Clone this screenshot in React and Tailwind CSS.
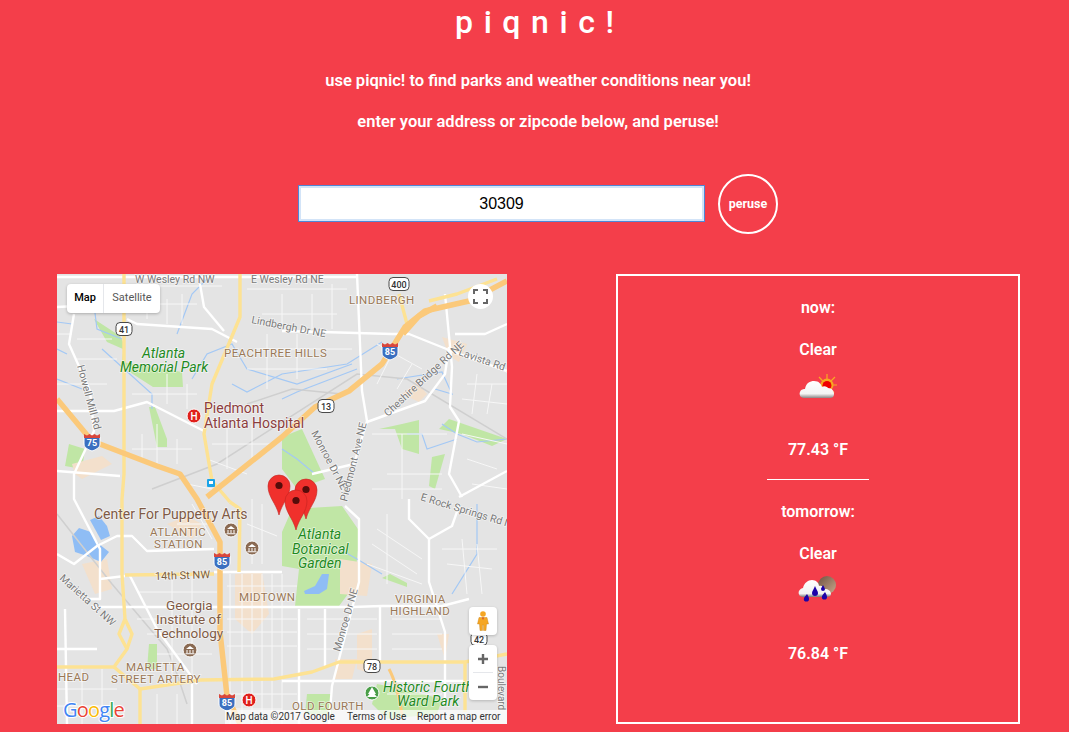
const yellowRoads = [
  'M67 0 L67 200 L65 225 L65 300 L68 345 L75 360 L70 375 L57 393 L0 393',
  'M68 345 L62 360 L70 375',
  'M183 0 L183 43 L155 110 L147 160 L155 207 L173 228',
  'M173 228 L183 235 L182 298',
  'M68 301 L157 300',
  'M57 393 L83 415 L143 406 L217 405 L255 398 L282 388 L408 388 L450 380',
  'M83 415 L83 450',
  'M408 388 L408 438',
  'M342 20 L350 50',
  'M372 27 L400 20 L440 5',
];

const orangeRoads = [
  'M0 125 L35 167 L100 192 L123 200 L140 225 L163 268 L163 358 L170 422 L183 450',
  'M450 7 L412 27 L368 37 L348 53 L325 90 L292 117 L258 133 L225 163 L150 223',
  'M346 60 L362 42 L380 32',
];

const whiteRoads = [
  'M0 3 L300 3',
  'M70 45 L80 50 L155 55 L180 68',
  'M143 10 L147 33 L167 57',
  'M17 40 L12 70 L33 117 L37 157 L17 200 L17 225 L43 275 L43 325 L30 325',
  'M0 137 L57 137 L90 128 L147 157',
  'M0 33 L20 32',
  'M0 197 L63 202',
  'M225 57 L265 58 L335 60 L352 60 L402 80 L450 97',
  'M300 0 L305 117 L310 147 L297 190 L255 200',
  'M388 20 L395 93 L393 133 L402 147 L392 200 L405 223',
  'M310 148 L368 127 L388 100 L392 73',
  'M450 50 L428 60 L398 60',
  'M402 223 L450 197',
  'M288 232 L302 245 L302 308 L295 335 L275 412 L272 450',
  'M35 333 L225 333 L295 333 L325 332 L385 332 L412 325',
  'M352 225 L352 245 L372 265 L395 252 L402 232',
  'M372 265 L372 308 L388 358 L388 432',
  'M323 332 L323 388',
  'M225 407 L408 407',
  'M242 335 L242 450',
  'M268 335 L268 392',
  'M157 298 L225 298',
  'M43 305 L68 302',
  'M0 280 L17 290 L40 272 L60 262 L75 262 L90 277 L157 275',
  'M8 335 L10 450',
  'M72 300 L100 355 L140 410',
  'M0 375 L40 375',
  'M135 450 L135 410',
];

const thinRoads = [
  'M173 300 L173 450 M185 300 L185 450 M195 300 L195 450 M205 300 L205 450 M215 300 L215 450 M225 300 L225 450',
  'M170 312 L240 312 M170 345 L240 345 M170 358 L240 358 M170 372 L240 372 M170 420 L240 420 M170 435 L225 435',
  'M250 345 L320 345 M250 360 L320 360 M250 375 L320 375 M335 345 L385 345 M335 360 L385 360 M335 375 L385 375 M330 420 L385 420',
  'M80 318 L160 318 M80 345 L160 345 M90 360 L155 360 M100 380 L155 380 M115 300 L115 400 M135 300 L135 400',
  'M0 415 L60 415 M0 432 L60 432 M25 395 L25 450 M45 395 L45 450 M100 420 L100 450 M120 420 L120 450',
  'M90 20 L90 45 M110 25 L110 50 M125 20 L125 50 M80 12 L165 12 M90 30 L140 30',
  'M20 65 L55 65 M20 85 L60 85 M0 110 L50 110 M0 60 L15 60',
  'M75 120 L140 120 M110 100 L110 130 M130 110 L130 135 M75 175 L135 175 M85 160 L85 185 M100 150 L100 190 M120 165 L120 190',
  'M155 170 L215 170 M170 145 L170 195 M195 150 L195 190 M150 185 L190 200',
  'M190 15 L290 15 M205 40 L280 40 M225 20 L225 55 M255 20 L255 55 M275 10 L275 55',
  'M200 75 L295 75 M190 95 L270 95 M210 60 L210 115 M240 60 L240 105',
  'M320 70 L365 95 M335 80 L320 110 M355 90 L340 115',
  'M410 110 L450 110 M405 125 L450 130 M420 100 L415 140 M435 110 L430 140',
  'M315 160 L390 160 M330 200 L385 200 M345 160 L345 225 M315 215 L385 215',
  'M405 160 L450 170 M410 185 L440 195 M415 210 L450 215',
  'M320 255 L365 285 M315 270 L360 300 M330 240 L330 310 M310 290 L365 310',
  'M385 275 L440 275 M390 290 L435 295 M405 265 L410 320 M420 270 L425 320',
  'M135 230 L155 265 M120 250 L155 250 M130 210 L155 215',
  'M190 250 L220 262 M195 225 L195 290 M205 230 L205 290',
];

const parks = [
  'M37 45 L63 62 L67 70 L65 88 L125 98 L126 113 L96 113 L68 95 L66 75 L50 68 Z',
  'M235 235 L285 232 L303 258 L297 312 L282 332 L238 332 L242 295 L225 292 L225 258 Z',
  'M92 133 L98 133 L110 165 L110 173 L100 173 Z',
  'M225 163 L245 155 L268 205 L240 215 L225 195 Z',
  'M345 150 L362 146 L362 180 L345 175 L338 155 L322 155 L345 150 Z',
  'M382 155 L392 145 L450 165 L435 172 L405 160 Z',
  'M92 370 L100 370 L100 395 L90 395 Z',
  'M320 410 L345 415 L385 425 L380 440 L330 445 L315 430 Z',
  'M250 420 L275 420 L275 440 L248 440 Z',
  'M12 170 L28 175 L25 195 L8 192 Z',
  'M333 300 L350 309 L350 313 L325 304 Z',
  'M375 183 L388 180 L378 215 L372 212 Z',
];

const peachAreas = [
  'M15 190 L45 182 L55 190 L35 200 L25 205 L18 200 Z',
  'M283 285 L315 290 L310 322 L283 320 Z',
  'M345 120 L360 108 L370 120 L362 128 Z',
  'M385 63 L410 70 L402 88 L392 82 Z',
  'M178 300 L205 298 L212 340 L195 360 L178 345 Z',
  'M110 250 L130 242 L145 250 L135 265 Z',
  'M25 290 L50 285 L55 315 L38 320 Z',
  'M300 360 L315 355 L315 400 L300 395 Z',
  'M380 360 L392 360 L388 385 Z',
  'M278 385 L300 385 L295 405 L278 405 Z',
];

const streams = [
  'M0 48 L15 50 M35 15 L40 55 L65 65 M45 75 L95 120 L95 135',
  'M135 105 L150 80 L175 70 L190 95 L240 110 L295 90',
  'M175 110 L190 118 L225 100 L290 90 L325 68',
  'M340 105 L385 98 L395 120 L378 115',
  'M300 95 L240 118 L225 125',
  'M385 150 L400 160 L420 168 L450 165',
  'M350 160 L365 160 L370 175 L400 165',
  'M225 175 L240 185 L258 200',
  'M282 275 L300 285 L325 300',
  'M420 230 L420 280 L395 320',
  'M0 75 L10 80 M0 105 L25 115',
  'M120 60 L135 20 L150 5',
];

const railLines = [
  'M95 215 L160 190 L300 100 L350 105 L450 165',
  'M0 240 L55 310 L110 375 L120 400 L130 430',
  'M285 120 L235 115 L190 130',
];

const mapLabels = [
  { t: 'W Wesley Rd NW', x: 78, y: 9, s: 10.5, f: '#7a7a7a' },
  { t: 'E Wesley Rd NE', x: 194, y: 9, s: 10.5, f: '#7a7a7a' },
  { t: 'Lindbergh Dr NE', x: 194, y: 49, s: 10.5, f: '#7a7a7a', r: 'rotate(11 194 49)' },
  { t: 'Lavista Rd NE', x: 401, y: 81, s: 10.5, f: '#7a7a7a', r: 'rotate(19 401 81)' },
  { t: 'Howell Mill Rd', x: 20, y: 92, s: 10.5, f: '#7a7a7a', r: 'rotate(75 20 92)' },
  { t: 'Cheshire Bridge Rd NE', x: 331, y: 143, s: 10.5, f: '#7a7a7a', r: 'rotate(-43 331 143)' },
  { t: 'Monroe Dr NE', x: 254, y: 159, s: 10.5, f: '#7a7a7a', r: 'rotate(62 254 159)' },
  { t: 'Piedmont Ave NE', x: 290, y: 228, s: 10.5, f: '#7a7a7a', r: 'rotate(-76 290 228)' },
  { t: 'E Rock Springs Rd NE', x: 363, y: 226, s: 10.5, f: '#7a7a7a', r: 'rotate(17 363 226)' },
  { t: 'Monroe Dr NE', x: 283, y: 378, s: 10.5, f: '#7a7a7a', r: 'rotate(-74 283 378)' },
  { t: 'Marietta St NW', x: 2, y: 305, s: 10.5, f: '#7a7a7a', r: 'rotate(42 2 305)' },
  { t: 'Boulevard', x: 441, y: 392, s: 10, f: '#7a7a7a', r: 'rotate(90 441 392)' },
  { t: 'Atlanta', x: 85, y: 84, s: 14, f: '#1f8a1f', i: true },
  { t: 'Memorial Park', x: 63, y: 98, s: 14, f: '#1f8a1f', i: true },
  { t: 'Atlanta', x: 241, y: 265, s: 14, f: '#1f8a1f', i: true },
  { t: 'Botanical', x: 235, y: 280, s: 14, f: '#1f8a1f', i: true },
  { t: 'Garden', x: 241, y: 294, s: 14, f: '#1f8a1f', i: true },
  { t: 'Historic Fourth', x: 326, y: 418, s: 14, f: '#1f8a1f', i: true },
  { t: 'Ward Park', x: 340, y: 432, s: 14, f: '#1f8a1f', i: true },
  { t: 'Piedmont', x: 147, y: 139, s: 14, f: '#8c3d3d' },
  { t: 'Atlanta Hospital', x: 147, y: 154, s: 14, f: '#8c3d3d' },
  { t: 'Center For Puppetry Arts', x: 37, y: 245, s: 14, f: '#7f5a45' },
  { t: 'Georgia', x: 109, y: 336, s: 13.5, f: '#7f5a45' },
  { t: 'Institute of', x: 99, y: 350, s: 13.5, f: '#7f5a45' },
  { t: 'Technology', x: 97, y: 364, s: 13.5, f: '#7f5a45' },
  { t: '14th St NW', x: 98, y: 306, s: 11, f: '#7a5c3c', r: 'rotate(-2 98 306)' },
  { t: 'PEACHTREE HILLS', x: 167, y: 83, s: 11.5, f: '#9a7856', l: 0.4 },
  { t: 'LINDBERGH', x: 292, y: 30, s: 11.5, f: '#9a7856', l: 0.4 },
  { t: 'ATLANTIC', x: 93, y: 262, s: 11.5, f: '#9a7856', l: 0.4 },
  { t: 'STATION', x: 97, y: 274, s: 11.5, f: '#9a7856', l: 0.4 },
  { t: 'MIDTOWN', x: 182, y: 327, s: 11.5, f: '#9a7856', l: 0.4 },
  { t: 'VIRGINIA', x: 338, y: 329, s: 11.5, f: '#9a7856', l: 0.4 },
  { t: 'HIGHLAND', x: 333, y: 341, s: 11.5, f: '#9a7856', l: 0.4 },
  { t: 'MARIETTA', x: 69, y: 397, s: 11.5, f: '#9a7856', l: 0.4 },
  { t: 'STREET ARTERY', x: 54, y: 409, s: 11.5, f: '#9a7856', l: 0.4 },
  { t: 'HEAD', x: 1, y: 407, s: 11.5, f: '#9a7856', l: 0.4 },
  { t: 'OLD FOURTH', x: 235, y: 436, s: 11.5, f: '#9a7856', l: 0.4 },
];

function Shield({ x, y, label }) {
  return (
    <g transform={`translate(${x} ${y})`}>
      <path d="M-8 -5 L8 -5 L8 2 C8 6 3 8 0 9 C-3 8 -8 6 -8 2 Z" fill="#3a6fc0" stroke="#fff" strokeWidth="1" />
      <path d="M-8 -8 L-5 -6.5 L-2.5 -8 L0 -6.5 L2.5 -8 L5 -6.5 L8 -8 L8 -4 L-8 -4 Z" fill="#d9473c" />
      <text x="0" y="4" textAnchor="middle" fontSize="9" fontWeight="700" fill="#fff" fontFamily="Roboto, sans-serif">{label}</text>
    </g>
  );
}

function RoadSign({ x, y, label, w = 16 }) {
  return (
    <g transform={`translate(${x} ${y})`}>
      <rect x={-w / 2} y="-6.5" width={w} height="13" rx="4" fill="#fff" stroke="#4a4a4a" strokeWidth="1" />
      <text x="0" y="3.5" textAnchor="middle" fontSize="9" fontWeight="500" fill="#333" fontFamily="Roboto, sans-serif">{label}</text>
    </g>
  );
}

function Pin({ x, y }) {
  return (
    <g transform={`translate(${x} ${y})`}>
      <path d="M0 40 C-3 28 -11 22 -11 11 A11 11 0 1 1 11 11 C11 22 3 28 0 40 Z" fill="#f0302c" stroke="#c22420" strokeWidth="0.6" />
      <circle cx="0" cy="10.5" r="3.6" fill="#560c0a" />
    </g>
  );
}

function HospitalDot({ x, y }) {
  return (
    <g transform={`translate(${x} ${y})`}>
      <circle r="7" fill="#e0201c" stroke="#fff" strokeWidth="1" />
      <text y="3.5" textAnchor="middle" fontSize="10" fontWeight="500" fill="#fff" fontFamily="Roboto, sans-serif">H</text>
    </g>
  );
}

function PoiDot({ x, y, fill = '#8a6a52' }) {
  return (
    <g transform={`translate(${x} ${y})`}>
      <circle r="7" fill={fill} stroke="#fff" strokeWidth="1" />
      <path d="M-4 -1 L0 -4 L4 -1 Z M-3.5 0 H-2.5 V3 H-3.5 Z M-0.5 0 H0.5 V3 H-0.5 Z M2.5 0 H3.5 V3 H2.5 Z M-4.5 3.2 H4.5 V4.2 H-4.5 Z" fill="#fff" />
    </g>
  );
}

function MapArt() {
  return (
    <svg viewBox="0 0 450 450" className="w-full h-full block font-normal" style={{ fontFamily: 'Roboto, sans-serif' }}>
      <rect width="450" height="450" fill="#e4e4e4" />
      {parks.map((d, i) => <path key={i} d={d} fill="#c0e6a5" />)}
      {peachAreas.map((d, i) => <path key={i} d={d} fill="#f3e0cc" />)}
      {streams.map((d, i) => <path key={i} d={d} fill="none" stroke="#a3c8f5" strokeWidth="1.2" />)}
      <path d="M15 262 L22 254 L34 258 L42 270 L52 278 L44 288 L30 282 L18 278 Z" fill="#8fbdf5" />
      <path d="M33 246 L42 242 L50 252 L53 262 L44 266 Z" fill="#8fbdf5" />
      <path d="M247 317 L258 312 L265 300 L272 300 L270 315 L262 320 L248 320 Z" fill="#8fbdf5" />
      {railLines.map((d, i) => <path key={i} d={d} fill="none" stroke="#cfcfcf" strokeWidth="1.5" />)}
      {thinRoads.map((d, i) => <path key={i} d={d} fill="none" stroke="#f7f7f7" strokeWidth="1" />)}
      {whiteRoads.map((d, i) => <path key={i} d={d} fill="none" stroke="#fff" strokeWidth="2.4" strokeLinejoin="round" />)}
      {yellowRoads.map((d, i) => <path key={i} d={d} fill="none" stroke="#fde293" strokeWidth="3.4" strokeLinejoin="round" />)}
      {orangeRoads.map((d, i) => <path key={i} d={d} fill="none" stroke="#fbc97a" strokeWidth="5.5" strokeLinejoin="round" />)}
      <path d="M332 395 Q340 410 345 440" fill="none" stroke="#fbc97a" strokeWidth="3" />

      {mapLabels.map((l, i) => (
        <text
          key={i}
          x={l.x}
          y={l.y}
          transform={l.r}
          fontSize={l.s}
          fill={l.f}
          fontStyle={l.i ? 'italic' : 'normal'}
          letterSpacing={l.l}
          stroke="#ffffff"
          strokeOpacity="0.6"
          strokeWidth="1.5"
          paintOrder="stroke"
        >
          {l.t}
        </text>
      ))}

      <Shield x={35} y={168} label="75" />
      <Shield x={333} y={77} label="85" />
      <Shield x={165} y={287} label="85" />
      <Shield x={170} y={428} label="85" />
      <RoadSign x={67} y={55} label="41" />
      <RoadSign x={342} y={10} label="400" w={20} />
      <RoadSign x={269} y={132} label="13" />
      <RoadSign x={315} y={392} label="78" />
      <RoadSign x={422} y={365} label="42" />

      <rect x="150" y="205" width="8" height="8" rx="1" fill="#19a4e8" />
      <rect x="152" y="207" width="4" height="3" fill="#fff" />
      <HospitalDot x={137} y={142} />
      <HospitalDot x={192} y={426} />
      <PoiDot x={174} y={256} />
      <PoiDot x={195} y={274} />
      <PoiDot x={133} y={376} />
      <circle cx="315" cy="419" r="7" fill="#4a9e48" stroke="#fff" strokeWidth="1" />
      <path d="M315 413 L319 420 L311 420 Z M315 417 L320 423 L310 423 Z" fill="#fff" />

      <Pin x={222} y={201} />
      <Pin x={249} y={205} />
      <Pin x={239} y={216} />

      <text x="6" y="443" fontSize="20" fontWeight="500" fontFamily="'Open Sans', sans-serif" stroke="#fff" strokeWidth="2" paintOrder="stroke" letterSpacing="-0.8">
        <tspan fill="#4285f4">G</tspan>
        <tspan fill="#ea4335">o</tspan>
        <tspan fill="#fbbc05">o</tspan>
        <tspan fill="#4285f4">g</tspan>
        <tspan fill="#34a853">l</tspan>
        <tspan fill="#ea4335">e</tspan>
      </text>
    </svg>
  );
}

function MapPanel() {
  return (
    <div className="relative w-[450px] h-[450px] overflow-hidden shrink-0">
      <MapArt />
      {/* map type buttons */}
      <div className="absolute left-[10px] top-[10px] flex h-[29px] bg-white rounded-sm shadow-[0_1px_3px_rgba(0,0,0,0.25)] text-[11px] font-['Roboto',sans-serif]">
        <div className="w-[37px] flex items-center justify-center font-medium text-black border-r border-gray-200">Map</div>
        <div className="w-[56px] flex items-center justify-center text-[#565656] font-normal">Satellite</div>
      </div>
      {/* fullscreen */}
      <div className="absolute left-[411px] top-[10px] w-[25px] h-[25px] rounded-full bg-white flex items-center justify-center">
        <svg width="15" height="15" viewBox="0 0 15 15" fill="none" stroke="#666" strokeWidth="2">
          <path d="M1 5V1H5M10 1H14V5M14 10V14H10M5 14H1V10" />
        </svg>
      </div>
      {/* pegman */}
      <div className="absolute left-[412px] top-[333px] w-[28px] h-[28px] bg-white rounded-sm shadow-[0_1px_3px_rgba(0,0,0,0.2)] flex items-center justify-center">
        <svg width="12" height="20" viewBox="0 0 12 20">
          <circle cx="6" cy="3" r="2.8" fill="#f5a623" />
          <path d="M2 6.5H10L11.5 13H9.5L9 19.5H6.5V14H5.5V19.5H3L2.5 13H0.5Z" fill="#f5a623" stroke="#c47f10" strokeWidth="0.4" />
          <path d="M5 6.5H7L6 9Z" fill="#d0422f" />
        </svg>
      </div>
      {/* zoom */}
      <div className="absolute left-[412px] top-[371px] w-[28px] h-[55px] bg-white rounded-sm shadow-[0_1px_3px_rgba(0,0,0,0.2)] flex flex-col items-center">
        <div className="h-[27px] w-full flex items-center justify-center">
          <svg width="12" height="12" viewBox="0 0 12 12"><path d="M1 6H11M6 1V11" stroke="#666" strokeWidth="2.4" /></svg>
        </div>
        <div className="w-[20px] h-px bg-gray-200" />
        <div className="h-[27px] w-full flex items-center justify-center">
          <svg width="12" height="12" viewBox="0 0 12 12"><path d="M1 6H11" stroke="#666" strokeWidth="2.4" /></svg>
        </div>
      </div>
      {/* attribution */}
      <div className="absolute right-0 bottom-0 w-[282px] h-[14px] bg-white/70 text-[10px] leading-[14px] font-normal text-[#333] font-['Roboto',sans-serif] whitespace-nowrap">
        <div className="flex">
          <span className="w-[122px] pl-[1px]">Map data ©2017 Google</span>
          <span className="w-[70px]">Terms of Use</span>
          <span>Report a map error</span>
        </div>
      </div>
    </div>
  );
}

function PartlyCloudyIcon() {
  return (
    <svg width="38" height="26" viewBox="0 0 38 26">
      <defs>
        <linearGradient id="cloudA" x1="0" y1="0" x2="0" y2="1">
          <stop offset="0" stopColor="#fff" />
          <stop offset="0.75" stopColor="#f4f4f4" />
          <stop offset="1" stopColor="#8b8585" />
        </linearGradient>
      </defs>
      <g stroke="#f7a823" strokeWidth="1.2">
        <path d="M28 0V22M17 11H38M20 3L35 19M36 3L20 19" />
      </g>
      <circle cx="28" cy="11" r="6.5" fill="#f7a823" />
      <circle cx="28" cy="11.5" r="4.5" fill="#f00000" />
      <path d="M5 24 C1 24 0 20 1 18 C2 15 5 15 6 15 C7 9 11 7 15 7 C20 7 22 10 23 13 C25 11 29 13 29 14 C33 14 35 17 35 20 C35 23 33 24 31 24 Z" fill="url(#cloudA)" />
    </svg>
  );
}

function RainIcon() {
  return (
    <svg width="40" height="30" viewBox="0 0 40 30">
      <defs>
        <linearGradient id="moonA" x1="0" y1="0" x2="1" y2="1">
          <stop offset="0" stopColor="#6f5241" />
          <stop offset="1" stopColor="#c9a88c" />
        </linearGradient>
        <linearGradient id="cloudB" x1="0" y1="0" x2="0" y2="1">
          <stop offset="0" stopColor="#fff" />
          <stop offset="0.8" stopColor="#f2f2f2" />
          <stop offset="1" stopColor="#777" />
        </linearGradient>
      </defs>
      <circle cx="29" cy="9" r="9" fill="url(#moonA)" />
      <path d="M5 21 C1 21 0 17 1 15 C2 13 4 12 5 12 C6 7 10 4 14 4 C18 4 21 7 21 10 C23 9 26 11 27 13 C30 13 33 15 33 18 C33 20 31 21 29 21 Z" fill="url(#cloudB)" />
      <g fill="#1d02a8">
        <path d="M17 10 C18 13 20 15 20 17 A3 3 0 0 1 14 17 C14 15 16 13 17 10 Z" />
        <path d="M25 9 C26 11 27 12 27 13 A2 2 0 0 1 23 13 C23 12 24 11 25 9 Z" />
        <path d="M9 18 C10 20 11 21 11 23 A2.6 2.6 0 0 1 5.8 23 C5.8 21 8 20 9 18 Z" />
        <path d="M27 16 C28 18 29 19 29 21 A2.6 2.6 0 0 1 23.8 21 C23.8 19 26 18 27 16 Z" />
      </g>
    </svg>
  );
}

function Forecast({ label, Icon, temp }) {
  return (
    <div className="flex flex-col items-center">
      <p className="h-[20px] leading-[20px]">{label}</p>
      <p className="h-[20px] leading-[20px] mt-[22px]">Clear</p>
      <div className="mt-[9px] h-[36px] flex items-center justify-center">
        <Icon />
      </div>
      <p className="h-[20px] leading-[20px] mt-[35px]">{temp}</p>
    </div>
  );
}

export default function App() {
  return (
    <div className="h-[732px] overflow-hidden bg-[#f43e4a] text-white font-['Roboto',sans-serif] font-semibold">
      <h1 className="h-[44px] leading-[44px] text-center text-[32px] font-medium tracking-[0.33em] pl-[0.33em]">piqnic!</h1>

      <p className="mt-[26px] h-[21px] leading-[21px] text-center text-[16.5px] pl-[7px]">use piqnic! to find parks and weather conditions near you!</p>
      <p className="mt-[20px] h-[21px] leading-[21px] text-center text-[16.5px] pl-[7px]">enter your address or zipcode below, and peruse!</p>

      <div className="mt-[42px] flex items-start justify-center gap-[13px] pl-[7px]">
        <input
          type="text"
          defaultValue="30309"
          className="mt-[11px] w-[407px] h-[37px] bg-white text-black text-center text-[16px] font-['Liberation_Sans',sans-serif] font-normal border border-[#4f86d6] shadow-[inset_0_0_0_2px_#d3e4f8] outline-none"
        />
        <button className="w-[60px] h-[60px] rounded-full border-2 border-white text-[12.5px] font-bold text-white">peruse</button>
      </div>

      <div className="mt-[40px] flex justify-between pl-[57px] pr-[49px]">
        <MapPanel />
        <div className="w-[404px] h-[450px] border-2 border-white flex flex-col items-center pt-[22px] text-[16px]">
          <Forecast label="now:" Icon={PartlyCloudyIcon} temp="77.43 °F" />
          <div className="w-[102px] h-px bg-white mt-[19px] mb-[22px]" />
          <Forecast label="tomorrow:" Icon={RainIcon} temp="76.84 °F" />
        </div>
      </div>
    </div>
  );
}
